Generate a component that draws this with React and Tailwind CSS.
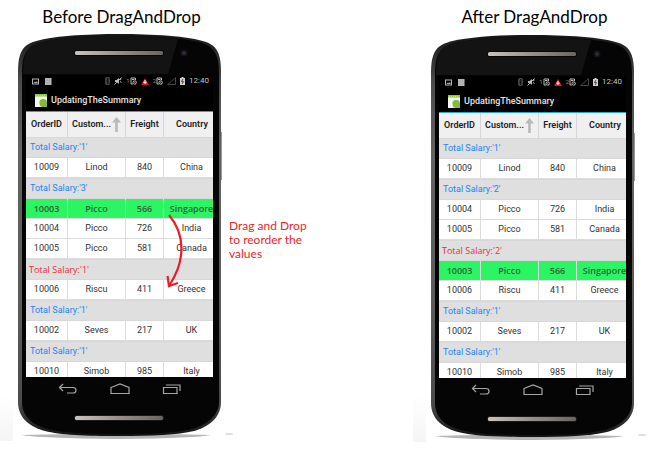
const before = [
  { sum: "Total Salary:'1'" },
  { row: ["10009", "Linod", "840", "China"] },
  { sum: "Total Salary:'3'" },
  { row: ["10003", "Picco", "566", "Singapore"], active: true },
  { row: ["10004", "Picco", "726", "India"] },
  { row: ["10005", "Picco", "581", "Canada"] },
  { sum: "Total Salary:'1'", changed: true },
  { row: ["10006", "Riscu", "411", "Greece"] },
  { sum: "Total Salary:'1'" },
  { row: ["10002", "Seves", "217", "UK"] },
  { sum: "Total Salary:'1'" },
  { row: ["10010", "Simob", "985", "Italy"] },
];

const after = [
  { sum: "Total Salary:'1'" },
  { row: ["10009", "Linod", "840", "China"] },
  { sum: "Total Salary:'2'" },
  { row: ["10004", "Picco", "726", "India"] },
  { row: ["10005", "Picco", "581", "Canada"] },
  { sum: "Total Salary:'2'", changed: true },
  { row: ["10003", "Picco", "566", "Singapore"], active: true },
  { row: ["10006", "Riscu", "411", "Greece"] },
  { sum: "Total Salary:'1'" },
  { row: ["10002", "Seves", "217", "UK"] },
  { sum: "Total Salary:'1'" },
  { row: ["10010", "Simob", "985", "Italy"] },
];

function Casing({ id }) {
  const metal = `metal-${id}`;
  const edge = `edge-${id}`;
  const haze = `haze-${id}`;
  return (
    <svg className="absolute inset-0 overflow-visible" width="203" height="402" viewBox="0 0 203 402" aria-hidden="true">
      <defs>
        <linearGradient id={metal} x1="0" y1="0" x2="1" y2="0">
          <stop offset="0" stopColor="#c9c2bd" />
          <stop offset="0.5" stopColor="#968f8a" />
          <stop offset="1" stopColor="#6b6560" />
        </linearGradient>
        <linearGradient id={edge} x1="0" y1="0" x2="0" y2="1">
          <stop offset="0" stopColor="#161616" />
          <stop offset="0.12" stopColor="#4c4c4c" />
          <stop offset="0.3" stopColor="#636363" />
          <stop offset="0.7" stopColor="#5a5a5a" />
          <stop offset="0.92" stopColor="#4a4a4a" />
          <stop offset="1" stopColor="#111111" />
        </linearGradient>
        <linearGradient id={haze} x1="0" y1="0" x2="0" y2="1">
          <stop offset="0" stopColor="#ffffff" />
          <stop offset="1" stopColor="#f5f5f5" />
        </linearGradient>
      </defs>
      <rect x="-18" y="360" width="13" height="47" fill={`url(#${haze})`} />
      <path d="M3 401 Q100 398 193 401 Q180 404 100 405 Q20 404 3 401Z" fill="#b5b5b5" />
      <ellipse cx="211" cy="400" rx="4" ry="1" fill="#dddddd" />
      <path d="M202 98h1.500v48h-1.500z" fill="#333333" />
      <path d="M0 38C0 20 4 12 15 8C32 2 68 0 101 0C134 0 171 2 188 8C199 12 203 20 203 38V368C203 384 190 393 176 397C160 401 134 402 101 402C68 402 42 401 27 397C12 393 0 384 0 368Z" fill={`url(#${edge})`} />
      <path d="M4 38C4 22 8 14 18 10C34 4 68 2 101 2C134 2 168 4 184 9C196 13 201 21 201 38V368C201 382 188 391 174 395C158 399 134 400 101 400C68 400 44 399 30 395C14 391 4 382 4 368Z" fill="#050505" />
      <path d="M5 38C5 22 8 14 18 10C34 4 68 2 101 2C122 2 142 3 160 5L150 40H5Z" fill="#131313" />
      <rect x="56" y="16" width="90" height="6" rx="3" fill="#080808" />
      <rect x="57" y="17" width="88" height="4" rx="1.500" fill={`url(#${metal})`} />
      <circle cx="166" cy="19" r="3.500" fill="#17131a" />
      <circle cx="166" cy="19" r="1.700" fill="#3c2b3c" />
      <rect x="56" y="381" width="90" height="6" rx="3" fill="#1c1a19" />
      <rect x="57" y="382" width="88" height="4" rx="1.500" fill={`url(#${metal})`} />
    </svg>
  );
}

function SimIcon() {
  return (
    <svg width="7" height="8" viewBox="0 0 7 8" fill="none" stroke="#b9b9b9" strokeWidth="1" aria-hidden="true">
      <path d="M3 7H1V1H5.500V3" />
      <path d="M2 2.500H4.500" />
      <circle cx="4.700" cy="5.500" r="1.700" />
      <path d="M3.600 4.400L5.900 6.600" strokeWidth="0.700" />
    </svg>
  );
}

function StatusBar() {
  return (
    <div className="flex h-3 items-center justify-between pl-1.5 pr-1">
      <div className="flex items-center gap-1.5">
        <svg width="7" height="7" viewBox="0 0 7 7" aria-hidden="true">
          <rect x="0.500" y="1" width="6" height="5" fill="none" stroke="#b5b5b5" />
          <path d="M1.500 5L3 3.500L4 4.300L5 3L5.800 5Z" fill="#b5b5b5" />
        </svg>
        <svg width="7" height="7" viewBox="0 0 7 7" aria-hidden="true">
          <rect width="6.500" height="7" fill="#b8b8b8" />
          <path d="M2.200 0V7M4.300 0V7M0 2.300H6.500M0 4.600H6.500" stroke="#999999" strokeWidth="0.300" />
        </svg>
      </div>
      <div className="flex items-center gap-1">
        <svg width="5" height="8" viewBox="0 0 5 8" aria-hidden="true">
          <rect width="5" height="8" rx="2" fill="#4a4a4a" />
          <path d="M1 2.500L4 5.500L2.500 7V1L4 2.500L1 5.500" fill="none" stroke="#0a0a0a" strokeWidth="0.700" />
        </svg>
        <svg width="8" height="8" viewBox="0 0 8 8" aria-hidden="true">
          <path d="M1 3H2.500L5 1V7L2.500 5H1Z" fill="#b5b5b5" />
          <path d="M0.500 7.500L7.500 0.500M6 3L7.500 2M6 4.500L7.500 5.500" stroke="#c8c8c8" strokeWidth="0.900" />
        </svg>
        <div className="flex items-center text-[6px] leading-none text-[#8a8a8a]">
          1<SimIcon />
        </div>
        <svg width="8" height="7" viewBox="0 0 8 7" aria-hidden="true">
          <path d="M4 0L8 7H0Z" fill="#e01414" />
          <path d="M4 2V6M2.300 4.300H5.700" stroke="#ffffff" />
        </svg>
        <div className="flex items-center text-[6px] leading-none text-[#8a8a8a]">
          2<SimIcon />
        </div>
        <svg width="9" height="8" viewBox="0 0 9 8" aria-hidden="true">
          <path d="M0.700 7.500L8.500 0.700V7.500Z" fill="none" stroke="#4d4d4d" strokeWidth="0.900" />
        </svg>
        <svg width="5" height="8" viewBox="0 0 5 8" aria-hidden="true">
          <path d="M1.500 0H3.500V1H5V8H0V1H1.500Z" fill="#d0d0d0" />
          <path d="M3 2L1.500 4.600H3.500L2 7" fill="none" stroke="#222222" strokeWidth="0.800" />
        </svg>
        <span className="text-[8px] leading-none text-[#c4c4c4]">12:40</span>
      </div>
    </div>
  );
}

function ActionBar() {
  return (
    <div className="flex h-6 items-center gap-1 pl-[9px] pt-0.5">
      <svg width="12" height="13" viewBox="0 0 12 13" aria-hidden="true">
        <rect width="12" height="13" fill="#f4f7ee" />
        <rect width="12" height="2.500" fill="#8cc63f" />
        <path d="M1 1.500H11" stroke="#d5ecb0" strokeWidth="0.700" strokeDasharray="1 1" />
        <path d="M4.500 9.500A3.800 3.800 0 0 1 12 8V13H7Q4.500 12 4.500 9.500Z" fill="#86b93a" />
        <path d="M5.300 6.200L6.500 7.800" stroke="#86b93a" strokeWidth="0.700" />
      </svg>
      <h3 className="text-[9px] font-medium leading-none text-[#e4e4e4]">UpdatingTheSummary</h3>
    </div>
  );
}

function OrdersTable({ rows }) {
  return (
    <table className="w-[194px] table-fixed border-separate border-spacing-0 text-center text-[9px] leading-none text-[#333333]">
      <colgroup>
        <col className="w-[42px]" />
        <col className="w-[58px]" />
        <col className="w-[38px]" />
        <col className="w-[56px]" />
      </colgroup>
      <thead>
        <tr className="h-[25px] bg-[#f0f0f0] text-[#222222]">
          <th className="border-r border-[#d6d6d6] p-0 font-semibold">OrderID</th>
          <th className="border-r border-[#d6d6d6] p-0 font-semibold">
            <div className="flex items-center justify-between px-1">
              Custom...
              <svg width="9" height="15" viewBox="0 0 9 15" aria-hidden="true">
                <path d="M4.500 0L9 5.500H5.800V15H3.200V5.500H0Z" fill="#b9b9b9" />
              </svg>
            </div>
          </th>
          <th className="border-r border-[#d6d6d6] p-0 font-semibold">Freight</th>
          <th className="p-0 font-semibold">Country</th>
        </tr>
      </thead>
      <tbody>
        {rows.map((item, i) =>
          item.sum ? (
            <tr key={i} className="h-[21px] bg-[#dfdfdf]">
              <td
                colSpan={4}
                className={
                  item.changed
                    ? "border-y border-[#d8d8d8] p-0 pl-[3px] text-left font-['Open_Sans',sans-serif] font-medium text-[#ee2b33]"
                    : "border-y border-[#d8d8d8] p-0 pl-1 text-left text-[#2386f5]"
                }
              >
                {item.sum}
              </td>
            </tr>
          ) : (
            <tr
              key={i}
              className={
                item.active
                  ? "h-5 bg-[#2bf562] font-['Open_Sans',sans-serif] font-semibold text-[#35603f]"
                  : "h-5 bg-white"
              }
            >
              {item.row.map((cell, c) => (
                <td key={c} className="border-b border-r border-[#dcdcdc] p-0">
                  {cell}
                </td>
              ))}
            </tr>
          )
        )}
      </tbody>
    </table>
  );
}

function NavBar() {
  return (
    <nav className="flex items-center justify-center gap-8 pt-1.5">
      <button type="button" aria-label="Back">
        <svg width="20" height="12" viewBox="0 0 20 12" fill="none" stroke="#a5a5a5" strokeWidth="1.200" aria-hidden="true">
          <path d="M5 1L1.500 4.500L5 8M1.500 4.500H15C17 4.500 18 5.500 18 7.200C18 9 17 10 15 10H9" />
        </svg>
      </button>
      <button type="button" aria-label="Home">
        <svg width="20" height="12" viewBox="0 0 20 12" fill="none" stroke="#a5a5a5" strokeWidth="1.200" aria-hidden="true">
          <path d="M1 4.500L10 1L19 4.500V10.500H1Z" />
        </svg>
      </button>
      <button type="button" aria-label="Recent apps">
        <svg width="20" height="12" viewBox="0 0 20 12" fill="none" stroke="#a5a5a5" strokeWidth="1.200" aria-hidden="true">
          <path d="M1.500 4.500H15V10.500H1.500ZM4 2H18V8" />
        </svg>
      </button>
    </nav>
  );
}

function Phone({ id, rows, children }) {
  return (
    <div className="relative h-[402px] w-[203px] px-2 pt-[41px] font-[Roboto,sans-serif]">
      <Casing id={id} />
      <div className="relative">
        <div className="bg-black">
          <StatusBar />
          <ActionBar />
        </div>
        <div className="h-[266px] overflow-hidden border-t border-[#2ba6d0]">
          <OrdersTable rows={rows} />
        </div>
        <NavBar />
      </div>
      {children}
    </div>
  );
}

function DragArrow() {
  return (
    <svg className="absolute left-[146px] top-[180px]" width="24" height="76" viewBox="0 0 24 76" fill="none" stroke="#ee1c25" strokeWidth="2.200" aria-hidden="true">
      <path d="M5 1C21 20 22 46 5.500 71" />
      <path d="M3.500 62L5 72L14 69" />
    </svg>
  );
}

export default function App() {
  return (
    <main className="flex justify-between bg-white pb-5 pl-[18px] pr-6 text-black">
      <div className="flex">
        <section>
          <h2 className="h-[34px] pl-1 text-center font-[Lato,sans-serif] text-[17px] leading-[34px]">Before DragAndDrop</h2>
          <Phone id="before" rows={before}>
            <DragArrow />
          </Phone>
        </section>
        <p className="w-24 pl-2 pt-[219px] font-[Lato,sans-serif] text-xs leading-[14px] text-[#e8262d]">
          Drag and Drop <br />
          to reorder the <br />
          values
        </p>
      </div>
      <section>
        <h2 className="h-[35px] pl-1 text-center font-[Lato,sans-serif] text-[17px] leading-[34px]">After DragAndDrop</h2>
        <Phone id="after" rows={after} />
      </section>
    </main>
  );
}
